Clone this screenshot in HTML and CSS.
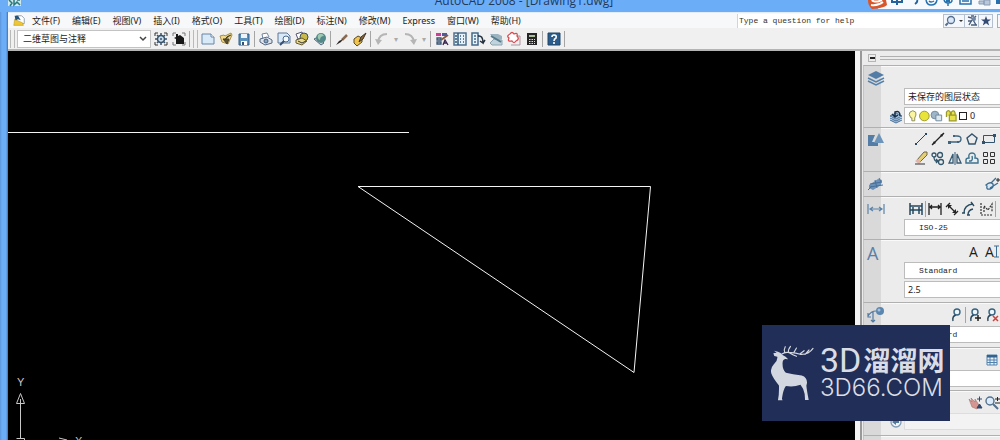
FILE: index.html
```html
<!DOCTYPE html>
<html lang="zh-CN">
<head>
<meta charset="utf-8">
<title>AutoCAD 2008 - [Drawing1.dwg]</title>
<link rel="stylesheet" href="styles.css">
</head>
<body>
<div class="window">
  <header class="titlebar">
    <svg class="app-icon" width="13" height="7" viewBox="0 0 13 7" aria-hidden="true"><path d="M0 0H13V6H0Z" fill="#cfe6ea"/><path d="M1 0L4 3L2 6M6 0V5L9 2L12 5M9 0H12" fill="none" stroke="#287a7d" stroke-width="1.500"/></svg>
    <span class="title">AutoCAD 2008 - [Drawing1.dwg]</span>
    <div class="ime">
      <svg class="ime-icons" width="136" height="12" viewBox="0 0 136 12" aria-hidden="true">
        <path d="M12 0H136V9H14Z" fill="#f7fafd"/>
        <path d="M4 0H22L23 5Q20 8 8 9Q4 6 4 0Z" fill="#d9562b"/><path d="M8 0Q9 2 14 1.500L18 0M7 5Q14 6 19 2" fill="none" stroke="#fff" stroke-width="2"/>
        <path d="M28 0V2H38V0M33 0V5M53 0Q54 2 51 4" fill="none" stroke="#24629b" stroke-width="2"/>
        <path d="M62 0Q63 5 67 5Q72 5 73 0M65 1Q67 3 70 1M80 0Q81 3 84 3Q88 3 88 0M84 3V6M96 0V4H107V0M98 1H105" fill="none" stroke="#2771ad" stroke-width="1.500"/>
        <path d="M82 0H86V2H82Z" fill="#2771ad"/><path d="M115 1H120V4H115ZM120 0H126V5H120Z" fill="#b8c7da" stroke="#879bb5"/><path d="M132 0H136V4H132Z" fill="#2771ad"/>
      </svg>
    </div>
  </header>

  <nav class="menubar">
    <svg class="doc-icon" width="14" height="14" viewBox="0 0 16 14" aria-hidden="true"><path d="M5 1H11L14 4V10H5Z" fill="#fff" stroke="#8c98a5"/><path d="M3 5L12 9L13 12H2Z" fill="#efc634" stroke="#a48923" stroke-width=".5"/><path d="M3 1H7L10 6L7 5L4 6Z" fill="#27547a"/></svg>
    <button>文件(F)</button><button>编辑(E)</button><button>视图(V)</button><button>插入(I)</button><button>格式(O)</button><button>工具(T)</button><button>绘图(D)</button><button>标注(N)</button><button>修改(M)</button><button>Express</button><button>窗口(W)</button><button>帮助(H)</button>
    <div class="help">
      <input class="help-input" type="text" aria-label="Help question" placeholder="Type a question for help">
      <button class="help-btn wide" aria-label="Search"><svg width="20" height="12" viewBox="0 0 20 12"><circle cx="7" cy="5" r="3.500" fill="#dce8f7" stroke="#55708f" stroke-width="1.300"/><path d="M4 8L1.500 10.500" stroke="#55708f" stroke-width="2"/><path d="M15 5H19L17 7Z" fill="#333"/></svg></button>
      <button class="help-btn" aria-label="Communication center"><svg width="12" height="12" viewBox="0 0 12 12"><path d="M2 2L6 3L10 10M10 1L6 5L3 10M2 6H6M5 1H8M5 10H11" fill="none" stroke="#4b5f7c" stroke-width="1.400"/><circle cx="8" cy="4" r="2" fill="#7187a6"/></svg></button>
      <button class="help-btn" aria-label="Favorites"><svg width="12" height="12" viewBox="0 0 12 12"><path d="M6 1L7.300 4.500H11L8 6.700L9.200 10.500L6 8.300L2.800 10.500L4 6.700L1 4.500H4.700Z" fill="#364b73"/></svg></button>
    </div>
    <span class="restore-edge"></span>
  </nav>

  <div class="toolbar">
    <span class="grip"></span>
    <select class="workspace" aria-label="Workspace"><option>二维草图与注释</option></select>
    <button class="tool" aria-label="Workspace settings"><svg viewBox="0 0 16 16"><path d="M2 5V2H5M11 2H14V5M14 11V14H11M5 14H2V11" fill="none" stroke="#333"/><circle cx="8" cy="8" r="3.500" fill="#c9dcec" stroke="#39536b" stroke-width="1.500"/><path d="M8 2V5M8 11V14M2 8H5M11 8H14M4 4L6 6M10 10L12 12M12 4L10 6M6 10L4 12" stroke="#39536b" stroke-width="1.500"/><circle cx="8" cy="8" r="1" fill="#39536b"/></svg></button>
    <button class="tool" aria-label="My workspace"><svg viewBox="0 0 16 16"><path d="M2 5V2H5M11 2H14V5M14 11V14H11M5 14H2V11" fill="none" stroke="#777"/><path d="M3 7L5 6V3H7V5L9 4L13 7V13H5V8Z" fill="#181818"/></svg></button>
    <span class="sep"></span>
    <span class="grip"></span>
    <button class="tool" aria-label="New"><svg viewBox="0 0 16 16"><path d="M2 3H11L14 6V13H2Z" fill="#d8e9f7" stroke="#6686a7"/><path d="M11 3V6H14" fill="#fff" stroke="#6686a7"/></svg></button>
    <button class="tool" aria-label="Open"><svg viewBox="0 0 16 16"><path d="M2 5L6 4L7 5L13 2L14 4L10 13L4 11Z" fill="#f2d98a" stroke="#a58d4d"/><path d="M13 4Q8 5 7 9M5 8L9 13L11 8Z" fill="#5c512e" stroke="#453e27"/></svg></button>
    <button class="tool" aria-label="Save"><svg viewBox="0 0 16 16"><path d="M3 3H13V14H3Z" fill="#5b91bd" stroke="#315c85"/><path d="M5 3H11V7H5Z" fill="#edf5fb"/><path d="M5 10H11V14H5Z" fill="#fff"/><path d="M6 11H8V14H6Z" fill="#31516e"/></svg></button>
    <span class="sep"></span>
    <button class="tool" aria-label="Plot"><svg viewBox="0 0 16 16"><path d="M5 8L4 3L9 2L11 6" fill="#fff" stroke="#71859c"/><path d="M2 8L9 6L14 9V12L7 14L2 11Z" fill="#dce3ed" stroke="#536680"/><circle cx="8" cy="10" r="2" fill="#8da4c1" stroke="#445e7c"/></svg></button>
    <button class="tool" aria-label="Plot preview"><svg viewBox="0 0 16 16"><path d="M2 2H11L14 5V12H2Z" fill="#d9e9f8" stroke="#5d7898"/><circle cx="10" cy="8" r="3" fill="#f4faff" stroke="#496b91"/><path d="M8 10L4 14" stroke="#354f71" stroke-width="2"/></svg></button>
    <button class="tool" aria-label="Publish"><svg viewBox="0 0 16 16"><path d="M2 3L8 1L10 6L4 8Z" fill="#fff" stroke="#557"/><circle cx="10" cy="6" r="4" fill="#c9b84c" stroke="#375365"/><path d="M2 9L8 7L13 10L8 14L2 12Z" fill="#e8d98d" stroke="#65592f"/><path d="M4 10L8 12L12 10" fill="none" stroke="#333"/></svg></button>
    <button class="tool" aria-label="3D DWF"><svg viewBox="0 0 16 16"><path d="M2 8L6 6L12 12L9 14Z" fill="#c1c9d3" stroke="#57687c"/><circle cx="9" cy="7" r="5" fill="#54898a"/><path d="M6 4Q10 1 12 5Q8 5 8 9Q5 8 6 4" fill="#9fc9b0"/></svg></button>
    <span class="sep"></span>
    <button class="tool" aria-label="Match properties"><svg viewBox="0 0 16 16"><path d="M13 4L8 9" stroke="#8a6a50" stroke-width="2.500"/><path d="M9 8L7 11L2 14L5 10Z" fill="#282422"/></svg></button>
    <button class="tool" aria-label="Block editor"><svg viewBox="0 0 16 16"><path d="M2 8L6 5L10 7V11L5 15L2 12Z" fill="#f0c44f" stroke="#5b4a26"/><path d="M14 2L11 8L7 11L9 6Z" fill="#8d6a35" stroke="#3c3225"/></svg></button>
    <span class="sep"></span>
    <button class="tool" aria-label="Undo"><svg viewBox="0 0 16 16"><path d="M13 3Q5 3 4 11" fill="none" stroke="#b5b5b5" stroke-width="2"/><path d="M1 8L4 14L8 9Z" fill="#b5b5b5"/></svg></button>
    <button class="drop" aria-label="Undo list">▾</button>
    <button class="tool" aria-label="Redo"><svg viewBox="0 0 16 16"><path d="M3 3Q11 3 12 11" fill="none" stroke="#b5b5b5" stroke-width="2"/><path d="M8 9L12 14L15 8Z" fill="#b5b5b5"/></svg></button>
    <button class="drop" aria-label="Redo list">▾</button>
    <span class="sep"></span>
    <button class="tool" aria-label="Properties"><svg viewBox="0 0 16 16"><path d="M2 2H7V5H2Z" fill="#c83f96"/><path d="M8 2H13V5H8Z" fill="#4f5b99"/><path d="M3 7H7V9H3ZM3 11H7V13H3Z" fill="none" stroke="#385471" stroke-width="1.300"/><path d="M14 4L7 9" stroke="#8a5b43" stroke-width="2"/><path d="M9 14L11 9L14 14M10 12H13" fill="none" stroke="#392652" stroke-width="1.300"/></svg></button>
    <button class="tool" aria-label="DesignCenter"><svg viewBox="0 0 16 16"><path d="M2 2H14V14H2Z" fill="#e6f1fa" stroke="#4e718f" stroke-width="1.500"/><path d="M6 2V14M8 5H9M11 5H12M8 8H9M11 8H12M8 11H9M11 11H12M3 5H5M3 8H5M3 11H5" stroke="#34597c" stroke-width="1.500"/></svg></button>
    <button class="tool" aria-label="Tool palettes"><svg viewBox="0 0 16 16"><path d="M2 2H8V14H2Z" fill="#e8f2fb" stroke="#426a8c" stroke-width="1.500"/><path d="M4 5H6M4 8H6M4 11H6" stroke="#426a8c" stroke-width="1.500"/><path d="M8 5Q13 4 13 12L10 10M13 12L15 9" fill="none" stroke="#222f3d" stroke-width="1.500"/></svg></button>
    <button class="tool" aria-label="Sheet set manager"><svg viewBox="0 0 16 16"><path d="M2 3H10L14 5V8H6Z" fill="#9bb4bf"/><path d="M6 8L14 9V14H4L2 12Z" fill="#c0d3dc" stroke="#8ba4b1"/><path d="M3 5L13 11" stroke="#547b8d" stroke-width="2"/></svg></button>
    <button class="tool" aria-label="Markup set manager"><svg viewBox="0 0 16 16"><path d="M6 5H14V14H5" fill="#eee" stroke="#a995a0"/><path d="M4 3Q6 0 8 3Q12 1 11 5Q14 8 10 10Q8 13 6 10Q1 11 3 7Q0 5 4 3Z" fill="#fff" stroke="#d84b50" stroke-width="1.300"/></svg></button>
    <button class="tool" aria-label="Calculator"><svg viewBox="0 0 16 16"><path d="M3 2H13V14H3Z" fill="#252525"/><path d="M5 4H11V6H5Z" fill="#aabf99"/><path d="M5 8.500H11M5 10.500H11M5 12.500H11" stroke="#ddd" stroke-dasharray="1.500 1"/></svg></button>
    <span class="sep"></span>
    <button class="tool" aria-label="Help"><svg viewBox="0 0 16 16"><path d="M2 2H14V14H2Z" fill="#2b5d8c" stroke="#214766"/><path d="M6 6Q6 4 8 4Q11 4 10 7Q8 8 8 10M8 11V13" fill="none" stroke="#fff" stroke-width="1.600"/></svg></button>
    <span class="sep"></span>
  </div>

  <div class="workarea">
    <main class="canvas">
      <svg class="drawing" role="img" aria-label="Drawing">
        <g fill="none" stroke="#f4f4f4">
          <path d="M0 81.500H401M350 135.500H642.500L626 321.500Z"/>
        </g>
        <g fill="none" stroke="#c8c8c8"><path d="M12.500 387V348M8.500 352.500H16.500L12.500 342.500ZM8.500 387.500H16.500V395M51 387L59 389"/></g>
        <text class="axis" x="9" y="335">Y</text><text class="axis" x="67" y="394">X</text>
      </svg>
    </main>

    <aside class="dashboard">
      <div class="dash-head"><button class="collapse" aria-label="Collapse"></button><span class="dash-lines"></span></div>

      <section class="panel layers">
        <div class="strip"><svg viewBox="0 0 18 18"><path d="M1 12L9 16L17 12M1 9L9 13L17 9" fill="none" stroke="#5681aa" stroke-width="1.500"/><path d="M9 2L17 6L9 10L1 6Z" fill="#537da6"/></svg></div>
        <div class="body">
          <select class="field" aria-label="Layer state"><option>未保存的图层状态</option></select>
          <div class="lead-row">
            <button class="tool" aria-label="Layer previous"><svg viewBox="0 0 16 16"><path d="M2 8L8 5L14 8L8 11ZM2 10L8 13L14 10M2 12L8 15L14 12" fill="#a8c2dc" stroke="#4a7299"/><path d="M12 8Q12 2 7 4V8M4 6L7 9L10 7" fill="none" stroke="#17314c" stroke-width="1.500"/></svg></button>
            <div class="field layer-field">
              <svg width="50" height="14" viewBox="0 0 52 14" aria-hidden="true"><path d="M3 9Q0 5 2 3Q5 0 8 3Q9 6 7 9V12H4V9Z" fill="#fbf5a1" stroke="#8a8c5b"/><circle cx="17" cy="7" r="5" fill="#e8e438" stroke="#9b9934"/><circle cx="28" cy="6" r="4" fill="#9fb6c8" stroke="#6f899d"/><path d="M29 6H35V12H29Z" fill="#dce7ee" stroke="#6f899d"/><path d="M40 8V3Q42 0 44 3V6M43 6H50V12H43ZM45 6V3Q48 0 49 4V6" fill="#e8e24a" stroke="#9b982d" stroke-width="1.300"/></svg>
              <span class="swatch"></span><span>0</span>
            </div>
          </div>
        </div>
      </section>

      <section class="panel draw">
        <div class="strip"><svg viewBox="0 0 18 18"><path d="M1 4H8L5 11H11V15H1Z" fill="#537da6"/><path d="M12 2L17 12H7Z" fill="#6d94ba"/></svg></div>
        <div class="body">
          <div class="icon-grid">
            <button class="tool" aria-label="Line"><svg viewBox="0 0 16 16"><path d="M3 13L13 3" stroke="#274a5e"/><path d="M2 12H4V14H2ZM12 2H14V4H12Z" fill="#274a5e"/></svg></button>
            <button class="tool" aria-label="Construction line"><svg viewBox="0 0 16 16"><path d="M2 14L14 2" stroke="#222" stroke-width="1.300"/><path d="M2 14L4 10L6 12ZM14 2L10 4L12 6Z" fill="#222"/></svg></button>
            <button class="tool" aria-label="Polyline"><svg viewBox="0 0 16 16"><path d="M2 11H11Q14 11 14 8Q14 5 10 5H7" fill="none" stroke="#3f657e" stroke-width="1.300"/><path d="M1 10H4V13H1ZM6 4H8V6H6ZM10 10H12V12H10Z" fill="#3f657e"/></svg></button>
            <button class="tool" aria-label="Polygon"><svg viewBox="0 0 16 16"><path d="M8 3L13 7L11 13H5L3 7Z" fill="none" stroke="#32536b" stroke-width="1.400"/></svg></button>
            <button class="tool" aria-label="Rectangle"><svg viewBox="0 0 16 16"><path d="M2.500 4.500H13.500V11.500H2.500Z" fill="none" stroke="#32536b"/><path d="M1 10H4V13H1ZM12 3H15V6H12Z" fill="#32536b"/></svg></button>
            <button class="tool" aria-label="Erase"><svg viewBox="0 0 16 16"><path d="M4 10L11 2H14V5L7 12Z" fill="#e5cf75" stroke="#6f6547"/><path d="M2 11L5 9L8 12L6 14Z" fill="#e0b4aa"/><path d="M2 14H12" stroke="#333"/></svg></button>
            <button class="tool" aria-label="Copy"><svg viewBox="0 0 16 16"><g fill="none" stroke="#32566b" stroke-width="1.300"><circle cx="4" cy="5" r="2"/><circle cx="10" cy="5" r="2.500"/><circle cx="11" cy="12" r="2.500"/><path d="M4 7Q4 12 8 11M6 9L8 11L6 13"/></g></svg></button>
            <button class="tool" aria-label="Mirror"><svg viewBox="0 0 16 16"><path d="M6 4V13H2ZM10 4V13H14Z" fill="none" stroke="#375b74" stroke-width="1.300"/><path d="M8 2V15" stroke="#375b74"/></svg></button>
            <button class="tool" aria-label="Offset"><svg viewBox="0 0 16 16"><path d="M2 13V10Q2 8 5 8Q4 3 8 3Q12 3 11 8Q14 8 14 10V13ZM5 11H7Q9 10 8 6" fill="none" stroke="#3c718f" stroke-width="1.400"/></svg></button>
            <button class="tool" aria-label="Array"><svg viewBox="0 0 16 16"><path d="M2.500 2.500H6.500V6.500H2.500ZM9.500 2.500H13.500V6.500H9.500ZM2.500 9.500H6.500V13.500H2.500ZM9.500 9.500H13.500V13.500H9.500Z" fill="none" stroke="#333" stroke-width="1"/></svg></button>
          </div>
        </div>
      </section>

      <section class="panel lights">
        <div class="strip"><svg viewBox="0 0 18 18"><path d="M2 10L11 4L15 5L14 10L6 15L2 13Z" fill="#6c91b6"/><path d="M1 15L5 11M3 9L15 7M3 12L16 10M8 5L10 13M12 3L14 7" stroke="#47709b"/></svg></div>
        <div class="body"><div class="icon-row end"><button class="tool edge" aria-label="Edit"><svg viewBox="0 0 16 16"><path d="M2 9Q6 5 9 8Q10 12 6 13Q2 14 3 10ZM7 7L12 2M6 12L14 7" fill="#dbe9f5" stroke="#3c6c91" stroke-width="1.300"/><path d="M12 4H16M14 2V6" stroke="#222"/></svg></button></div></div>
      </section>

      <section class="panel dims">
        <div class="strip"><svg viewBox="0 0 18 18"><path d="M1 4V14M17 4V14M3 9H15M6 7L3 9L6 11M12 7L15 9L12 11" fill="none" stroke="#5b83aa" stroke-width="1.200"/></svg></div>
        <div class="body">
          <div class="icon-row dim-row">
            <button class="tool" aria-label="Quick dimension"><svg viewBox="0 0 16 16"><path d="M2 2V14M14 2V14M2 5H14M5 6V13M11 6V13M2 9H14" stroke="#24485e" stroke-width="1.500"/></svg></button><span class="sep"></span>
            <button class="tool" aria-label="Linear"><svg viewBox="0 0 16 16"><path d="M2 2V14M14 2V14M3 6H13M5 4L3 6L5 8M11 4L13 6L11 8" fill="none" stroke="#222" stroke-width="1.300"/></svg></button>
            <button class="tool" aria-label="Aligned"><svg viewBox="0 0 16 16"><path d="M2 6L6 2M10 14L14 10M4 4L12 12" stroke="#222" stroke-width="1.300"/><path d="M4 4H8L4 8ZM12 12V8L8 12Z" fill="#222"/></svg></button>
            <button class="tool" aria-label="Arc length"><svg viewBox="0 0 16 16"><path d="M3 12Q3 4 12 3M7 14Q7 9 12 8M1 12H4M10 1L13 5M6 14H9" fill="none" stroke="#284b60" stroke-width="1.400"/></svg></button>
            <button class="tool" aria-label="Ordinate"><svg viewBox="0 0 16 16"><path d="M3 2V14H14M6 11V5L10 9L14 3V11" fill="none" stroke="#333" stroke-width="1.200" stroke-dasharray="2 1"/></svg></button><span class="sep"></span>
          </div>
          <select class="field mono" aria-label="Dimension style"><option>ISO-25</option></select>
        </div>
      </section>

      <section class="panel text">
        <div class="strip"><span class="strip-letter">A</span></div>
        <div class="body">
          <div class="icon-row end"><button class="letter">A</button><button class="letter">A<svg width="5" height="13" viewBox="0 0 5 13"><path d="M0 1H5M2.500 1V12M0 12H5" stroke="#3c6c91"/></svg></button></div>
          <select class="field mono" aria-label="Text style"><option>Standard</option></select>
          <input class="field" type="text" aria-label="Text height" value="2.5">
        </div>
      </section>

      <section class="panel leaders">
        <div class="strip"><svg viewBox="0 0 18 18"><path d="M1 10Q4 5 9 5M6 6V16M1 7V11H4M4 14L6 16L8 14" fill="none" stroke="#5078a0" stroke-width="1.200"/><circle cx="13" cy="5" r="4" fill="#5b86b0"/><circle cx="12" cy="4" r="1.500" fill="#a6c2dc"/></svg></div>
        <div class="body">
          <div class="icon-row end">
            <button class="tool" aria-label="Multileader"><svg viewBox="0 0 16 16"><path d="M8 8Q4 9 5 14" fill="none" stroke="#254459" stroke-width="1.400"/><circle cx="9" cy="5" r="3" fill="#eef6fc" stroke="#38637f" stroke-width="1.400"/></svg></button><span class="sep"></span>
            <button class="tool" aria-label="Add leader"><svg viewBox="0 0 16 16"><path d="M7 8Q3 9 4 14" fill="none" stroke="#254459" stroke-width="1.400"/><circle cx="8" cy="5" r="3" fill="#eef6fc" stroke="#38637f" stroke-width="1.400"/><path d="M8 11H14M11 8V14" stroke="#222" stroke-width="1.500"/></svg></button>
            <button class="tool" aria-label="Remove leader"><svg viewBox="0 0 16 16"><path d="M7 8Q3 9 4 14" fill="none" stroke="#254459" stroke-width="1.400"/><circle cx="8" cy="5" r="3" fill="#eef6fc" stroke="#38637f" stroke-width="1.400"/><path d="M9 9L14 14M14 9L9 14" stroke="#d0403b" stroke-width="1.500"/></svg></button>
          </div>
          <select class="field mono" aria-label="Multileader style"><option>Standard</option></select>
        </div>
      </section>

      <section class="panel tables">
        <div class="strip"></div>
        <div class="body">
          <div class="icon-row end"><button class="tool" aria-label="Table"><svg viewBox="0 0 16 16"><path d="M3 3H13V13H3ZM3 8H13M3 10.500H13M6 5V13M10 5V13" fill="#e7f2fc" stroke="#5282ac"/><path d="M3 3H13V5.500H3Z" fill="#34628c"/></svg></button></div>
          <select class="field mono" aria-label="Table style"><option></option></select>
        </div>
      </section>

      <section class="panel nav">
        <div class="strip"></div>
        <div class="body">
          <div class="icon-row end"><button class="tool" aria-label="Pan"><svg viewBox="0 0 16 16"><path d="M2 4L5 7L4 3L8 7L8 4L12 10L10 14L5 12Z" fill="#d59691" stroke="#a4706d" stroke-width=".6"/><path d="M10 4H15M12.500 1.500V6.500M10 13H15L12.500 9Z" fill="#30496c" stroke="#30496c"/></svg></button><button class="tool" aria-label="Zoom"><svg viewBox="0 0 16 16"><circle cx="6" cy="6" r="4" fill="#dcebf9" stroke="#52718e" stroke-width="1.400"/><path d="M9 9L14 14" stroke="#52718e" stroke-width="2"/><path d="M11 4H16M13.500 2V6M11 8H16" stroke="#222"/></svg></button></div>
          <div class="lead-row">
            <button class="tool" aria-label="Previous view"><svg viewBox="0 0 16 16"><circle cx="8" cy="8" r="5" fill="#eef3f7" stroke="#7f9bb4" stroke-width="1.300"/><path d="M4 8L8 5V7H11V9H8V11Z" fill="#50789d"/></svg></button>
            <select class="field pale" aria-label="View"><option></option></select>
          </div>
        </div>
      </section>
      <section class="panel rest"><div class="strip"></div></section>
    </aside>
  </div>

  <div class="watermark">
    <svg class="deer" width="43" height="57" viewBox="19 23 130 170" aria-hidden="true">
      <path d="M26 47L36 45L28 39L40 42L48 46L54 52Q64 56 71 65L62 64Q54 66 54 76Q53 96 64 106Q84 111 112 114Q128 119 128 136L126 145Q127 158 133 188H122Q122 167 116 154L108 142Q88 150 64 146Q56 156 52 184L54 189H40Q44 170 43 144Q25 122 20 108Q16 93 27 81Q40 69 38 57L29 55Z" fill="#d3d7df"/>
      <path d="M52 49Q61 42 76 45Q92 44 107 50Q132 52 146 32M61 45Q57 36 62 27M72 44Q70 36 78 26M88 45L96 31M106 49L119 39M122 50L134 37M74 45Q85 51 96 56" fill="none" stroke="#d3d7df" stroke-width="3.500" stroke-linecap="round"/>
    </svg>
    <div class="brand"><div class="brand-name"><span class="brand-latin">3D</span>溜溜网</div><div class="brand-url">3D66.COM</div></div>
  </div>
</div>
</body>
</html>
```
FILE: styles.css
```css
* { box-sizing: border-box; }
body { margin: 0; font: 9px/12px "Noto Sans", "Noto Sans CJK SC", sans-serif; color: #1c1c1c; }
button { padding: 0; border: 0; background: none; color: inherit; font: inherit; }
input, select { min-width: 0; font: inherit; color: inherit; border-radius: 0; }
svg { display: block; flex: none; }

.window { position: relative; display: flex; flex-direction: column; height: 100vh; padding-left: 8px; overflow: hidden; background: linear-gradient(90deg, #5d94d9 0, #6cadf8 2px, #6cadf8 6px, #3f72b5 8px); }
.titlebar { position: relative; display: flex; justify-content: center; align-items: flex-end; flex: none; height: 12px; margin-left: -8px; padding: 0 0 3px 48px; overflow: hidden; background: #6cadf8; }
.app-icon { position: absolute; left: 8px; top: 0; }
.title { font: 12px/16px "Open Sans", sans-serif; color: #1f3a5c; white-space: nowrap; }
.ime { position: absolute; right: 0; top: 0; }

.menubar { display: flex; align-items: center; gap: 12px; flex: none; height: 16px; padding-left: 4px; background: #f6f8fa; border-top: 1px solid #e3edf8; white-space: nowrap; }
.doc-icon { margin-right: -6px; }
.help { display: flex; align-items: center; margin-left: auto; height: 15px; }
.help-input { width: 206px; height: 14px; padding: 0 1px; border: 1px solid #d4d4d4; border-width: 0 0 0 1px; background: #fff; font: 8px/12px "Liberation Mono", monospace; }
.help-input::placeholder { color: #333; opacity: 1; }
.help-btn { display: flex; align-items: center; justify-content: center; width: 14px; height: 14px; border: 1px solid #b4bfd0; border-left: 0; background: #f4f7fb; }
.help-btn.wide { width: 22px; border-left: 1px solid #b4bfd0; }
.restore-edge { width: 3px; height: 14px; margin-left: -8px; border: 1px solid #8bb4de; border-right: 0; }

.toolbar { display: flex; align-items: center; gap: 2px; flex: none; height: 23px; padding: 0 2px; background: #f0f0f0; border-bottom: 2px solid #b4b4b4; }
.grip { flex: none; width: 5px; height: 18px; border: 1px solid #b9b9b9; border-width: 0 1px; }
.workspace { width: 134px; height: 18px; padding: 0 5px; border: 1px solid #c3c3c3; appearance: none; background: #fff url("data:image/svg+xml,%3Csvg xmlns='http://www.w3.org/2000/svg' width='8' height='6'%3E%3Cpath d='M1 1L4 4L7 1' fill='none' stroke='%23444' stroke-width='1.5'/%3E%3C/svg%3E") no-repeat right 3px center; }
.tool { flex: none; width: 16px; height: 16px; }
.tool svg { width: 16px; height: 16px; }
.sep { flex: none; width: 1px; height: 16px; margin-right: 1px; background: #a5a5a5; }
.drop { width: 8px; color: #aaa; font-size: 8px; }

.workarea { display: flex; flex: 1; min-height: 0; }
.canvas { flex: 1; min-width: 0; background: #000; }
.drawing { width: 100%; height: 100%; }
.axis { fill: #c8c8c8; font: 11px "Liberation Sans", sans-serif; }

.dashboard { display: flex; flex-direction: column; flex: none; width: 145px; padding-left: 1px; border-left: 5px solid #f4f4f4; background: #ececec; box-shadow: inset 2px 0 #999; overflow: hidden; }
.dash-head { display: flex; align-items: center; gap: 4px; height: 14px; padding-left: 7px; }
.collapse { width: 8px; height: 8px; border: 1px solid #b5b5b5; background: linear-gradient(#222, #222) center / 5px 2px no-repeat; }
.dash-lines { flex: 1; height: 4px; border: 1px solid #b0b0b0; border-width: 1px 0; }
.panel { display: flex; flex: none; margin-left: 2px; border-top: 1px solid #b0b0b0; border-left: 1px solid #c4c4c4; box-shadow: inset 0 1px #fafafa; }
.strip { flex: none; width: 17px; padding: 3px 0 0 3px; background: #d9d9d9; }
.strip svg { width: 18px; height: 18px; }
.strip-letter { font: 18px/20px "Open Sans", sans-serif; color: #5880a8; }
.body { display: flex; flex-direction: column; flex: 1; min-width: 0; gap: 2px; padding: 3px 0 3px 23px; }
.field { display: block; width: 100%; height: 17px; flex: none; padding: 0 3px; border: 1px solid #bcbcbc; border-right: 0; background: #fff; appearance: none; }
.mono { padding-left: 14px; font: 8px/12px "Liberation Mono", monospace; }
.pale { background: #f3f3f3; border-color: #ddd; }
.lead-row { display: flex; align-items: center; margin-left: -16px; }
.lead-row .field { flex: 1; }
.layer-field { display: flex; align-items: center; gap: 1px; }
.swatch { width: 8px; height: 8px; margin-right: 2px; border: 1px solid #222; }
.icon-grid { display: grid; grid-template-columns: repeat(5, 17px); row-gap: 3px; margin-left: 9px; }
.icon-row { display: flex; align-items: center; gap: 1px; height: 17px; }
.icon-row .sep { margin: 0; }
.end { justify-content: flex-end; }
.dim-row { margin-left: 4px; }
.letter { display: flex; align-items: center; min-width: 15px; font: 14px/18px "Open Sans", sans-serif; }
.layers { height: 62px; }
.layers .body { padding-top: 22px; }
.draw { height: 44px; }
.lights { height: 25px; }
.dims { height: 43px; }
.text { height: 63px; }
.leaders { height: 45px; }
.leaders .body { gap: 3px; }
.tables { height: 43px; }
.nav { height: 45px; }
.rest { flex: 1; }

.watermark { position: absolute; right: 50px; bottom: 19px; display: flex; align-items: center; gap: 6px; width: 188px; height: 96px; padding-left: 9px; background: #212e57; color: #dadde5; }
.brand { padding-bottom: 2px; white-space: nowrap; }
.brand-name { display: flex; align-items: center; gap: 2px; font: bold 27px/32px "Noto Sans CJK SC", sans-serif; }
.brand-latin { font: 34px/32px Roboto, sans-serif; }
.brand-url { font: 300 24px/24px Inter, sans-serif; }
```
